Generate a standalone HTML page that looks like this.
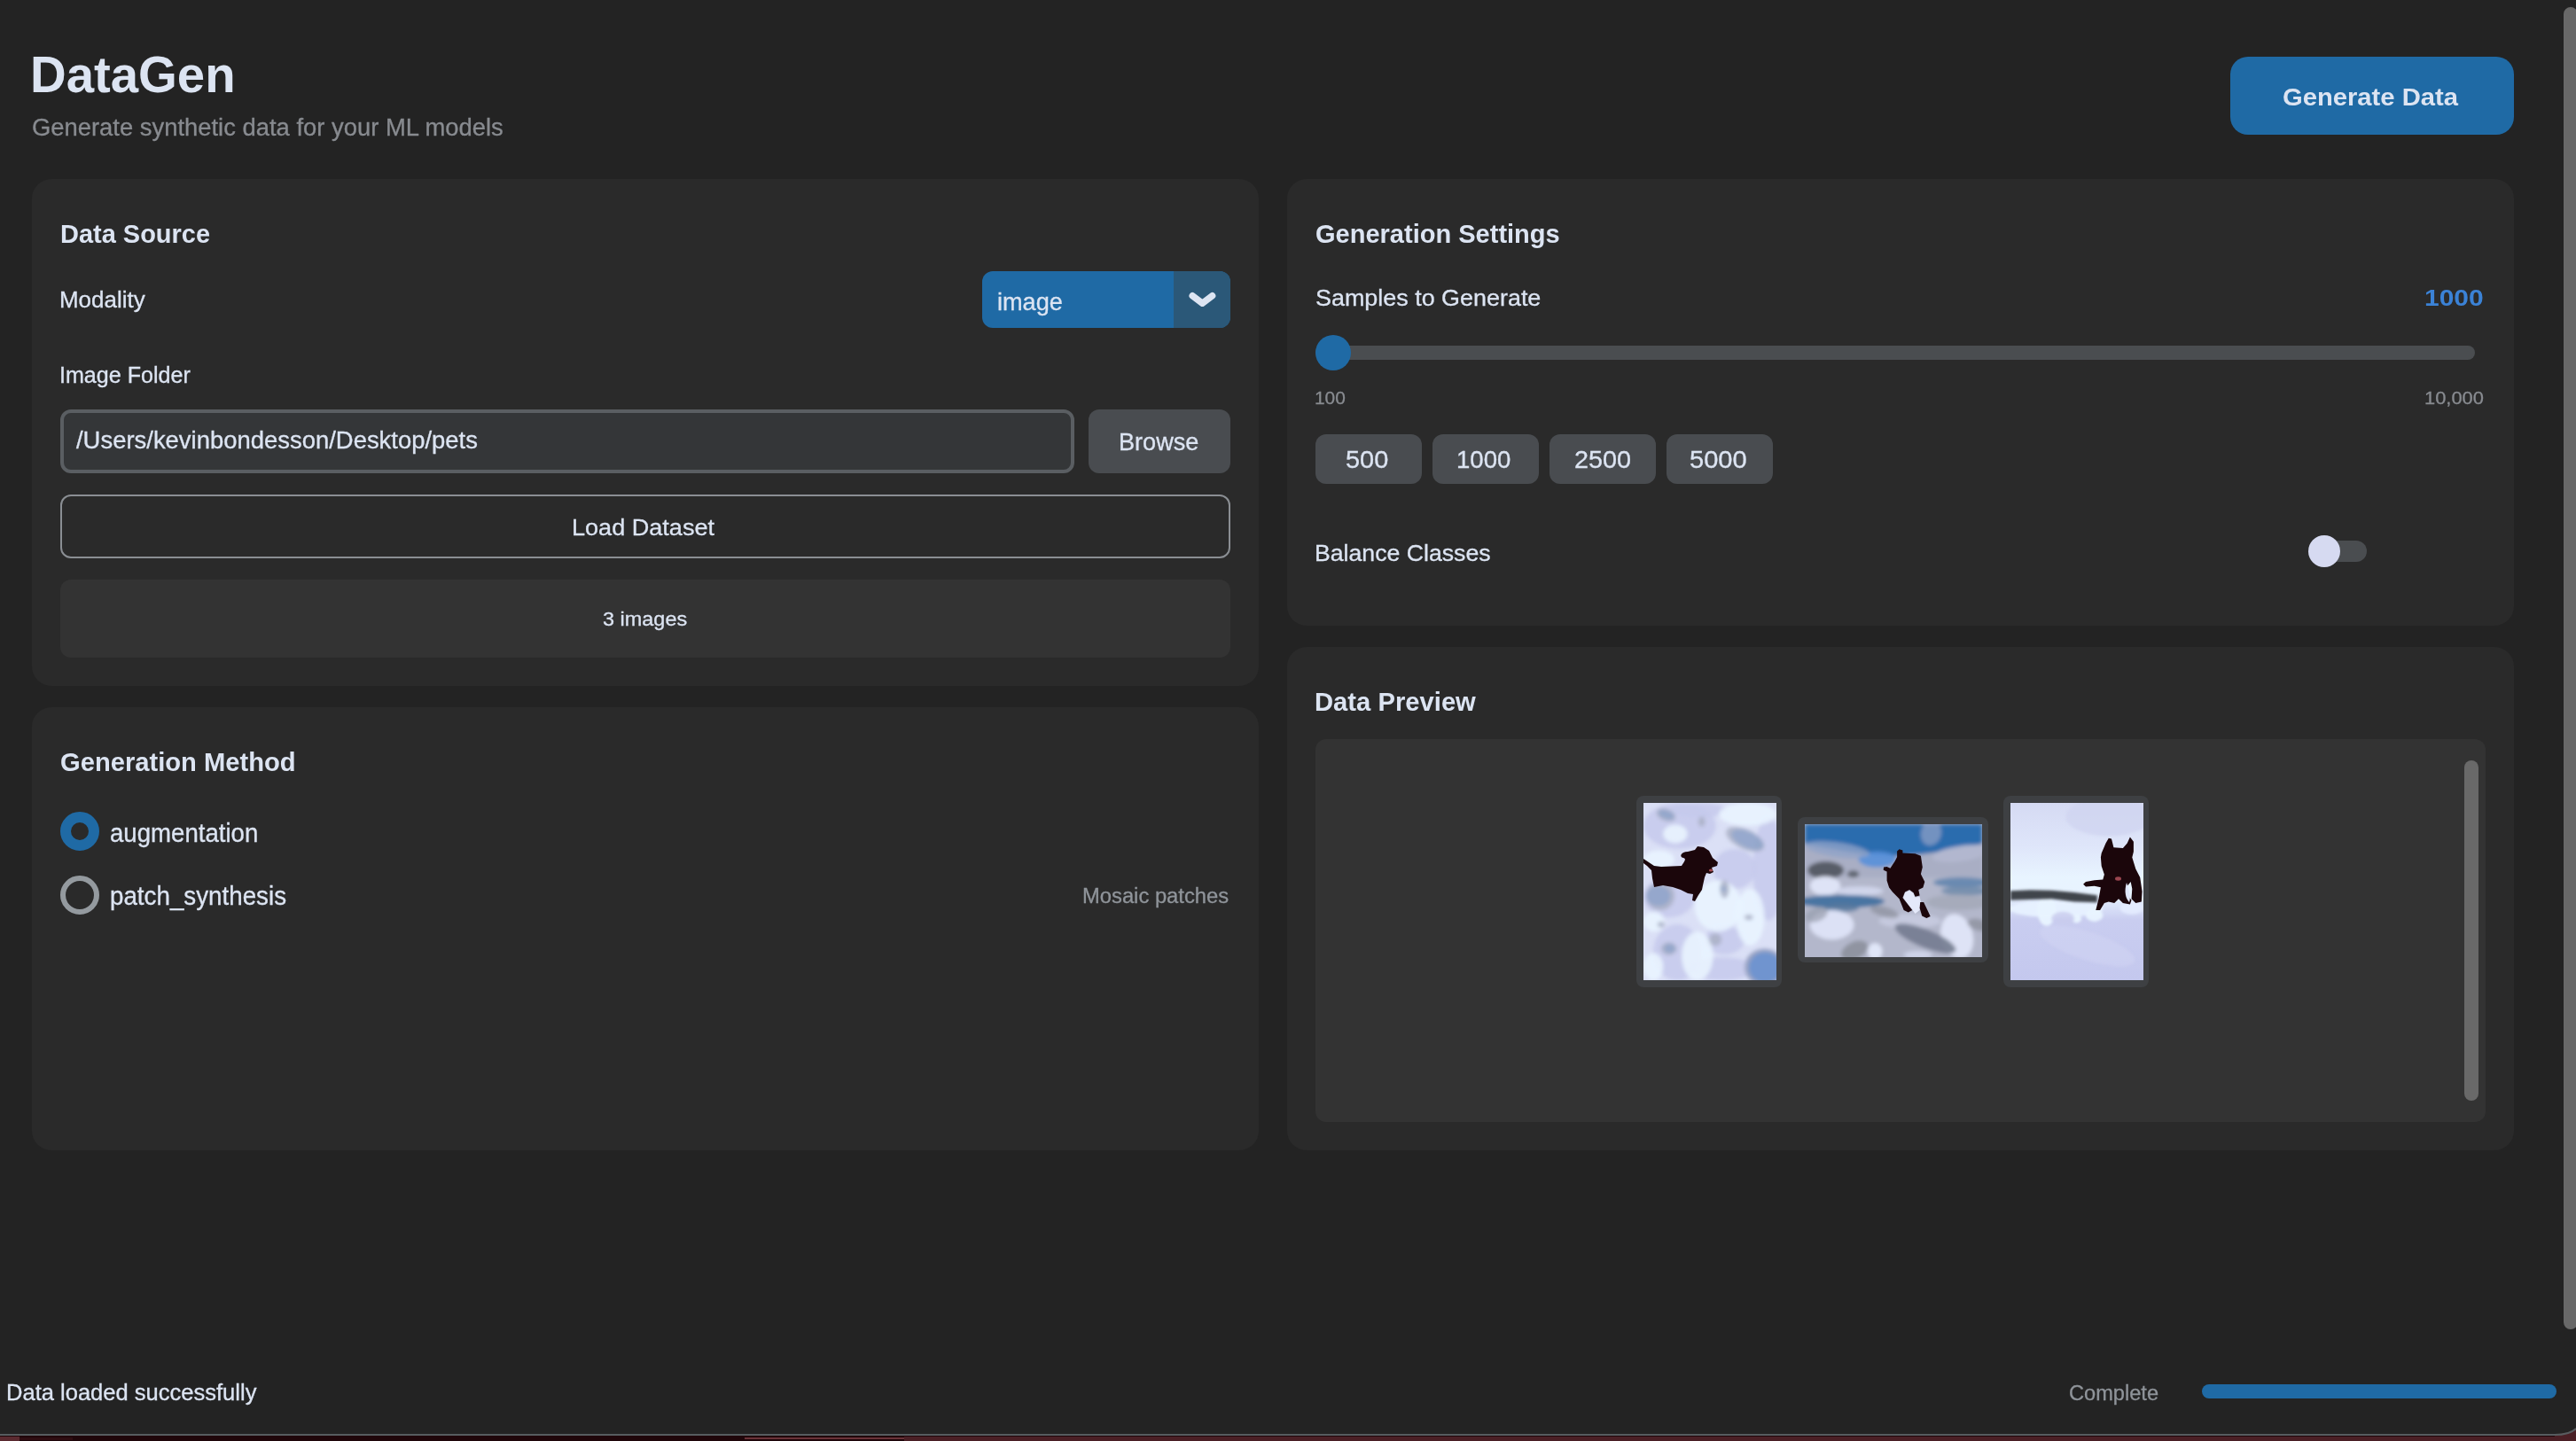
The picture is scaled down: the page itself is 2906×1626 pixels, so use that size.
<!DOCTYPE html>
<html>
<head>
<meta charset="utf-8">
<title>DataGen</title>
<style>
html,body{margin:0;padding:0;}
body{width:2906px;height:1626px;background:#232323;position:relative;overflow:hidden;font-family:"Liberation Sans",sans-serif;}
.a{position:absolute;box-sizing:border-box;}
.t{position:absolute;white-space:nowrap;line-height:1;transform-origin:0 0;font-family:"Liberation Sans",sans-serif;}
.card{background:#2a2a2a;border-radius:22px;}
.inner{background:#333333;border-radius:12px;}
.gbtn{background:#494c50;border-radius:12px;}
</style>
</head>
<body>
<!-- cards -->
<div class="a card" style="left:36px;top:202px;width:1384px;height:572px"></div>
<div class="a card" style="left:36px;top:798px;width:1384px;height:500px"></div>
<div class="a card" style="left:1452px;top:202px;width:1384px;height:504px"></div>
<div class="a card" style="left:1452px;top:730px;width:1384px;height:568px"></div>

<!-- generate button -->
<div class="a" style="left:2516px;top:64px;width:320px;height:88px;background:#1f6aa5;border-radius:20px"></div>

<!-- option menu -->
<div class="a" style="left:1108px;top:306px;width:280px;height:64px;background:#1f6aa5;border-radius:12px;overflow:hidden">
  <div class="a" style="left:216px;top:0;width:64px;height:64px;background:#2b5878"></div>
  <svg class="a" style="left:216px;top:0" width="64" height="64" viewBox="0 0 64 64"><path d="M21.2 27.8 L32.4 36.2 L43.6 27.8" fill="none" stroke="#dce4f2" stroke-width="7.5" stroke-linecap="round" stroke-linejoin="round"/></svg>
</div>

<!-- entry -->
<div class="a" style="left:68px;top:462px;width:1144px;height:72px;background:#343638;border:4px solid #5a5e62;border-radius:12px"></div>
<!-- browse -->
<div class="a gbtn" style="left:1228px;top:462px;width:160px;height:72px;border-radius:12px"></div>
<!-- load dataset -->
<div class="a" style="left:68px;top:558px;width:1320px;height:72px;border:2px solid #8a8e93;border-radius:12px"></div>
<!-- 3 images box -->
<div class="a inner" style="left:68px;top:654px;width:1320px;height:88px"></div>

<!-- radios -->
<div class="a" style="left:68px;top:916px;width:44px;height:44px;border-radius:50%;border:12px solid #1f6aa5"></div>
<div class="a" style="left:68px;top:988px;width:44px;height:44px;border-radius:50%;border:6px solid #949a9f"></div>

<!-- slider -->
<div class="a" style="left:1484px;top:390px;width:1308px;height:16px;border-radius:8px;background:#4a4d50"></div>
<div class="a" style="left:1484px;top:378px;width:40px;height:40px;border-radius:50%;background:#1f6aa5"></div>

<!-- presets -->
<div class="a gbtn" style="left:1484px;top:490px;width:120px;height:56px"></div>
<div class="a gbtn" style="left:1616px;top:490px;width:120px;height:56px"></div>
<div class="a gbtn" style="left:1748px;top:490px;width:120px;height:56px"></div>
<div class="a gbtn" style="left:1880px;top:490px;width:120px;height:56px"></div>

<!-- switch -->
<div class="a" style="left:2610px;top:610px;width:60px;height:24px;border-radius:12px;background:#4a4d50"></div>
<div class="a" style="left:2604px;top:604px;width:36px;height:36px;border-radius:50%;background:#d6daf1"></div>

<!-- preview inner -->
<div class="a inner" style="left:1484px;top:834px;width:1320px;height:432px"></div>
<div class="a" style="left:2780px;top:858px;width:16px;height:384px;border-radius:8px;background:#696969"></div>

<!-- main scrollbar -->
<div class="a" style="left:2892px;top:8px;width:16px;height:1492px;border-radius:8px;background:#686868"></div>

<!-- progress -->
<div class="a" style="left:2484px;top:1562px;width:400px;height:16px;border-radius:8px;background:#1f6aa5"></div>

<!-- bottom strip -->
<div class="a" style="left:0;top:1618px;width:2906px;height:2px;background:#575d60"></div>
<div class="a" style="left:0;top:1620px;width:2906px;height:6px;background:#1f060a"></div>
<div class="a" style="left:0;top:1621px;width:22px;height:5px;background:#5a2a30"></div>
<div class="a" style="left:22px;top:1622px;width:60px;height:3px;background:#2e0d12"></div>
<div class="a" style="left:840px;top:1622px;width:180px;height:2px;background:#6a3238"></div>
<div class="a" style="left:1020px;top:1621px;width:1886px;height:5px;background:#4a1f25"></div>
<svg class="a" style="left:2880px;top:1596px" width="26" height="30" viewBox="0 0 26 30"><path d="M2,22 C13,22 21,20 26,15 L26,30 L2,30 Z" fill="#4a1f25"/><path d="M2,23 C13,23 21,21 26,16" fill="none" stroke="#575d60" stroke-width="2"/></svg>

<div class="a" style="left:1846px;top:898px;width:164px;height:216px;background:#3e4043;border-radius:8px"></div><div class="a" style="left:2028px;top:922px;width:215px;height:164px;background:#3e4043;border-radius:8px"></div><div class="a" style="left:2260px;top:898px;width:164px;height:216px;background:#3e4043;border-radius:8px"></div>
<svg class="a" style="left:1854px;top:906px" width="150" height="200" viewBox="0 0 150 200"><defs><filter id="b1" x="-20%" y="-20%" width="140%" height="140%"><feGaussianBlur stdDeviation="2.2"/></filter><clipPath id="c1"><rect width="150" height="200"/></clipPath></defs><rect width="150" height="200" fill="#dbe0f6"/><g clip-path="url(#c1)"><g filter="url(#b1)"><ellipse cx="40.9" cy="25.9" rx="40.9" ry="25.9" fill="#c6c9ec" opacity="0.85"/><ellipse cx="141.3" cy="74.4" rx="17.7" ry="58.0" fill="#c6c9ec" opacity="0.85"/><ellipse cx="28.8" cy="106.6" rx="28.8" ry="22.5" fill="#c6c9ec" opacity="0.85"/><ellipse cx="38.3" cy="168.7" rx="27.4" ry="31.6" fill="#c6c9ec" opacity="0.85"/><ellipse cx="91.4" cy="154.9" rx="22.5" ry="16.1" fill="#c6c9ec" opacity="0.85"/><ellipse cx="88.2" cy="187.2" rx="38.6" ry="13.0" fill="#c6c9ec" opacity="0.85"/><ellipse cx="102.7" cy="74.4" rx="24.1" ry="22.5" fill="#c6c9ec" opacity="0.85"/><ellipse cx="62.5" cy="8.2" rx="32.2" ry="8.2" fill="#c6c9ec" opacity="0.85"/><ellipse cx="84.2" cy="116.2" rx="26.6" ry="29.0" fill="#e9f4ff" opacity="0.9"/><ellipse cx="60.8" cy="172.7" rx="17.7" ry="27.5" fill="#e9f4ff" opacity="0.9"/><ellipse cx="117.6" cy="13.0" rx="32.6" ry="13.0" fill="#e9f4ff" opacity="0.9"/><ellipse cx="17.5" cy="63.9" rx="17.5" ry="10.5" fill="#e9f4ff" opacity="0.9"/><ellipse cx="11.9" cy="133.9" rx="11.9" ry="11.3" fill="#e9f4ff" opacity="0.9"/><ellipse cx="120.4" cy="129.1" rx="16.1" ry="32.2" fill="#e9f4ff" opacity="0.9"/><ellipse cx="11.1" cy="184.8" rx="11.1" ry="15.5" fill="#e9f4ff" opacity="0.9"/><ellipse cx="35.9" cy="34.9" rx="13.7" ry="10.5" fill="#e9f4ff" opacity="0.9"/><ellipse cx="25.4" cy="13.6" rx="11.3" ry="6.8" fill="#aab0c6" opacity="0.85" transform="rotate(20 25.4 13.6)"/><ellipse cx="65.7" cy="21.2" rx="4.0" ry="5.6" fill="#aab0c6" opacity="0.85"/><ellipse cx="114.8" cy="41.0" rx="23.3" ry="10.9" fill="#aab0c6" opacity="0.85" transform="rotate(25 114.8 41.0)"/><ellipse cx="19.0" cy="105.0" rx="16.1" ry="16.1" fill="#aab0c6" opacity="0.85"/><ellipse cx="91.4" cy="97.3" rx="5.2" ry="10.1" fill="#aab0c6" opacity="0.85"/><ellipse cx="28.7" cy="164.5" rx="8.9" ry="7.2" fill="#aab0c6" opacity="0.85"/><ellipse cx="81.0" cy="154.1" rx="7.2" ry="7.2" fill="#aab0c6" opacity="0.85"/><ellipse cx="118.8" cy="129.1" rx="4.8" ry="3.2" fill="#aab0c6" opacity="0.85"/><ellipse cx="19.8" cy="137.2" rx="4.0" ry="3.2" fill="#aab0c6" opacity="0.85"/><ellipse cx="25.8" cy="13.2" rx="9.3" ry="4.8" fill="#6a90cc" opacity="0.38" transform="rotate(20 25.8 13.2)"/><ellipse cx="117.2" cy="41.4" rx="19.3" ry="8.9" fill="#6a90cc" opacity="0.38" transform="rotate(25 117.2 41.4)"/><ellipse cx="16.6" cy="105.0" rx="13.7" ry="11.3" fill="#6a90cc" opacity="0.38"/><ellipse cx="29.5" cy="164.1" rx="6.4" ry="5.2" fill="#6a90cc" opacity="0.38"/><ellipse cx="90.2" cy="96.9" rx="2.8" ry="3.2" fill="#6a90cc" opacity="0.38"/><ellipse cx="136.5" cy="185.4" rx="22.5" ry="20.9" fill="#9aa4c4"/><ellipse cx="137.3" cy="185.8" rx="18.5" ry="17.3" fill="#6590d2" opacity="0.8"/></g><path d="M0,63 L12,71 L20,72 L43,71 C46,66 49,63 45,62 C40,61 42,55 50,55 L58,53 L61,49 L68,50 L74,54 L78,62 L84,67 L83,71 L77,73 L79,78 L75,80 L71,79 L69,84 L67,93 L66,98 L62,104 L58,111 L55,110 L56,103 L50,102 L42,98 L33,95 L22,93 L12,95 L10,85 L9,76 L4,71 L0,68 Z" fill="#1b060b"/><ellipse cx="76" cy="76" rx="2.2" ry="1.6" fill="#a04a50"/></g></svg>
<svg class="a" style="left:2036px;top:930px" width="200" height="150" viewBox="0 0 200 150"><defs><filter id="b2" x="-20%" y="-20%" width="140%" height="140%"><feGaussianBlur stdDeviation="2"/></filter><clipPath id="c2"><rect width="200" height="150"/></clipPath></defs><rect width="200" height="150" fill="#b3b7cb"/><g clip-path="url(#c2)"><g filter="url(#b2)"><rect x="0" y="22" width="200" height="45" fill="#a9aec4"/><rect x="0" y="60" width="200" height="90" fill="#b3b7cb"/><path d="M0,0 L200,0 L200,22 C170,28 140,34 110,36 C80,36 40,30 0,22 Z" fill="#2b6cae"/><ellipse cx="81.7" cy="39.6" rx="21.1" ry="8.9" fill="#5590da" opacity="0.9"/><ellipse cx="36.7" cy="28.7" rx="36.7" ry="8.3" fill="#8fa3c8" opacity="0.8" transform="rotate(8 36.7 28.7)"/><ellipse cx="142.4" cy="10.2" rx="11.5" ry="14.0" fill="#93a3c8" opacity="0.7" transform="rotate(15 142.4 10.2)"/><ellipse cx="175.6" cy="33.2" rx="31.9" ry="8.9" fill="#b3b8d0" opacity="0.9" transform="rotate(-8 175.6 33.2)"/><ellipse cx="23.6" cy="52.0" rx="20.4" ry="9.9" fill="#535962" opacity="0.95"/><ellipse cx="54.6" cy="56.3" rx="6.7" ry="4.0" fill="#5a606a" opacity="0.9"/><ellipse cx="23.0" cy="69.6" rx="17.2" ry="10.9" fill="#e0e5f8" opacity="0.95"/><ellipse cx="61.9" cy="75.3" rx="26.8" ry="5.1" fill="#d3d8ee" opacity="0.9"/><ellipse cx="40.9" cy="87.1" rx="49.2" ry="7.3" fill="#44709f" opacity="0.95"/><ellipse cx="41.5" cy="94.5" rx="19.2" ry="5.1" fill="#56789e" opacity="0.8"/><ellipse cx="176.8" cy="65.8" rx="31.9" ry="5.7" fill="#5d83ad" opacity="0.85"/><ellipse cx="181.3" cy="75.3" rx="27.5" ry="5.1" fill="#6a87a8" opacity="0.8"/><ellipse cx="173.0" cy="88.1" rx="35.8" ry="8.9" fill="#a2a7b6" opacity="0.8"/><ellipse cx="30.6" cy="113.6" rx="24.9" ry="16.6" fill="#dee3f7" opacity="0.95"/><ellipse cx="171.7" cy="126.4" rx="17.9" ry="25.5" fill="#e0e5f8" opacity="0.95" transform="rotate(-15 171.7 126.4)"/><ellipse cx="79.2" cy="143.6" rx="8.3" ry="9.6" fill="#e3e8fa" opacity="0.95"/><ellipse cx="118.7" cy="109.2" rx="35.1" ry="8.3" fill="#c9cde2" opacity="0.8"/><ellipse cx="127.7" cy="147.5" rx="16.0" ry="4.5" fill="#d6dbf0" opacity="0.8"/><ellipse cx="136.0" cy="129.0" rx="37.0" ry="10.2" fill="#737b90" opacity="0.9" transform="rotate(22 136.0 129.0)"/><ellipse cx="56.2" cy="142.4" rx="16.0" ry="9.6" fill="#8a8e9a" opacity="0.85" transform="rotate(-25 56.2 142.4)"/><ellipse cx="13.1" cy="102.1" rx="13.1" ry="7.7" fill="#979cac" opacity="0.7" transform="rotate(-20 13.1 102.1)"/><ellipse cx="196.0" cy="113.6" rx="12.8" ry="6.4" fill="#8d919e" opacity="0.8" transform="rotate(15 196.0 113.6)"/><ellipse cx="90.0" cy="99.0" rx="16.6" ry="5.7" fill="#8b8f9b" opacity="0.7" transform="rotate(15 90.0 99.0)"/></g><path d="M113.0,77.2 L118.1,74.7 L122.6,77.9 L124.5,82.4 L129.6,81.7 L130.9,88.1 L129.6,97.0 L124.5,100.9 L121.3,96.4 L119.4,94.5 L111.1,83.0Z" fill="#e4e9fa"/><path d="M104.1,30.6 L106.6,28.3 L110.4,29.4 L110.4,32.6 L124.5,33.2 L130.9,35.8 L132.8,48.5 L130.9,56.2 L135.3,65.1 L133.4,71.5 L128.3,74.1 L129.6,80.4 L124.5,81.7 L122.6,77.2 L118.1,74.1 L113.0,76.6 L110.4,83.0 L119.4,94.5 L121.3,97.0 L116.8,99.6 L111.7,97.0 L106.6,84.3 L99.0,76.6 L95.1,71.5 L92.6,63.8 L92.6,53.6 L88.7,51.7 L89.0,48.5 L92.6,47.9 L96.4,49.8 L101.5,42.1 L104.1,37.0Z" fill="#1b060b"/><path d="M130.2,88.1 L134.1,88.1 L141.7,104.1 L137.3,106.0 L132.2,103.4 L129.6,94.5Z" fill="#1b060b"/></g></svg>
<svg class="a" style="left:2268px;top:906px" width="150" height="200" viewBox="0 0 150 200"><defs><linearGradient id="g3" x1="0" y1="0" x2="0" y2="1"><stop offset="0" stop-color="#d5daf3"/><stop offset="0.25" stop-color="#dfe6fa"/><stop offset="0.42" stop-color="#e8f4ff"/><stop offset="0.52" stop-color="#e8f3ff"/><stop offset="0.66" stop-color="#c9cdf0"/><stop offset="1" stop-color="#c4c8ee"/></linearGradient><filter id="b3" x="-20%" y="-20%" width="140%" height="140%"><feGaussianBlur stdDeviation="1.8"/></filter><clipPath id="c3"><rect width="150" height="200"/></clipPath></defs><rect width="150" height="200" fill="url(#g3)"/><g clip-path="url(#c3)"><g filter="url(#b3)"><ellipse cx="110.8" cy="15.6" rx="48.3" ry="21.7" fill="#cfd4f0" opacity="0.8"/><ellipse cx="51.2" cy="119.4" rx="53.1" ry="9.7" fill="#e7f1ff" opacity="0.95"/><ellipse cx="40.7" cy="121.1" rx="10.5" ry="17.7" fill="#e9f4ff" opacity="0.95"/><ellipse cx="94.7" cy="126.7" rx="9.7" ry="7.2" fill="#e9f4ff" opacity="0.95"/><ellipse cx="74.5" cy="130.7" rx="5.6" ry="4.8" fill="#e9f4ff" opacity="0.95"/><ellipse cx="136.9" cy="118.6" rx="13.3" ry="7.2" fill="#e4ecff" opacity="0.9"/><ellipse cx="59.2" cy="130.7" rx="12.9" ry="8.0" fill="#c9ccee" opacity="0.8"/><ellipse cx="86.6" cy="161.3" rx="56.3" ry="16.1" fill="#d2d6f4" opacity="0.5" transform="rotate(18 86.6 161.3)"/></g><g filter="url(#b3)"><path d="M0.0,99.3 L22.2,98.2 L46.4,98.8 L72.1,100.9 L97.9,104.2 L97.9,112.2 L72.1,111.4 L46.4,108.2 L22.2,109.0 L0.0,109.8Z" fill="#3f444c"/></g><path d="M102.7,56.7 L107.5,45.4 L110.8,39.8 L114.0,40.6 L116.4,50.2 L126.9,51.0 L131.7,45.4 L134.9,38.6 L138.9,43.8 L138.9,55.1 L137.3,61.5 L141.3,74.4 L146.2,84.0 L148.6,100.1 L147.8,111.4 L141.3,113.0 L136.5,108.2 L137.3,96.9 L135.7,88.9 L131.7,93.7 L130.1,101.7 L136.5,109.8 L134.9,114.6 L126.9,113.0 L122.0,108.2 L117.2,113.0 L110.8,111.4 L105.9,113.0 L101.1,121.1 L96.3,121.1 L99.5,108.2 L101.9,95.3 L94.7,93.7 L85.0,94.5 L82.1,91.8 L85.0,88.9 L94.7,87.3 L104.3,86.4 L105.9,80.8 L102.7,71.2 L101.9,61.5Z" fill="#1b060b"/><ellipse cx="121.5" cy="85.5" rx="3.5" ry="2.2" fill="#9a4650"/><path d="M131,90 C134,98 136,108 134,112 C130,108 128,100 131,90Z" fill="#dfe6fb"/></g></svg>
<div class="t" style="left:34.34px;top:55.59px;font-size:57.0px;font-weight:bold;color:#dce4f2;transform:scaleX(0.9880)">DataGen</div>
<div class="t" style="left:36.13px;top:130.94px;font-size:27.0px;font-weight:normal;color:#888b90;-webkit-text-stroke:0.3px;transform:scaleX(1.0144)">Generate synthetic data for your ML models</div>
<div class="t" style="left:67.62px;top:249.32px;font-size:29.5px;font-weight:bold;color:#dce4f2;transform:scaleX(0.9819)">Data Source</div>
<div class="t" style="left:67.12px;top:326.48px;font-size:25.0px;font-weight:normal;color:#dce4f2;-webkit-text-stroke:0.3px;transform:scaleX(1.0380)">Modality</div>
<div class="t" style="left:1125.24px;top:325.92px;font-size:28.5px;font-weight:normal;color:#dce4f2;-webkit-text-stroke:0.3px;transform:scaleX(0.9518)">image</div>
<div class="t" style="left:67.24px;top:410.88px;font-size:25.0px;font-weight:normal;color:#dce4f2;-webkit-text-stroke:0.3px;transform:scaleX(1.0037)">Image Folder</div>
<div class="t" style="left:86.00px;top:482.76px;font-size:27.5px;font-weight:normal;color:#dce4f2;-webkit-text-stroke:0.3px;transform:scaleX(0.9977)">/Users/kevinbondesson/Desktop/pets</div>
<div class="t" style="left:1261.73px;top:484.76px;font-size:27.5px;font-weight:normal;color:#dce4f2;-webkit-text-stroke:0.3px;transform:scaleX(0.9857)">Browse</div>
<div class="t" style="left:645.33px;top:581.51px;font-size:26.5px;font-weight:normal;color:#dce4f2;-webkit-text-stroke:0.3px;transform:scaleX(1.0213)">Load Dataset</div>
<div class="t" style="left:680.18px;top:688.49px;font-size:22.5px;font-weight:normal;color:#dce4f2;-webkit-text-stroke:0.3px;transform:scaleX(1.0421)">3 images</div>
<div class="t" style="left:67.83px;top:845.07px;font-size:29.5px;font-weight:bold;color:#dce4f2;transform:scaleX(0.9881)">Generation Method</div>
<div class="t" style="left:123.65px;top:925.50px;font-size:29.0px;font-weight:normal;color:#dce4f2;-webkit-text-stroke:0.3px;transform:scaleX(0.9516)">augmentation</div>
<div class="t" style="left:123.53px;top:997.10px;font-size:29.0px;font-weight:normal;color:#dce4f2;-webkit-text-stroke:0.3px;transform:scaleX(0.9571)">patch_synthesis</div>
<div class="t" style="left:1221.10px;top:1000.37px;font-size:23.0px;font-weight:normal;color:#8f949a;-webkit-text-stroke:0.3px;transform:scaleX(1.0334)">Mosaic patches</div>
<div class="t" style="left:2575.33px;top:95.42px;font-size:28.5px;font-weight:bold;color:#dce4f2;transform:scaleX(1.0241)">Generate Data</div>
<div class="t" style="left:1483.84px;top:248.82px;font-size:29.5px;font-weight:bold;color:#dce4f2;transform:scaleX(0.9836)">Generation Settings</div>
<div class="t" style="left:1483.79px;top:323.36px;font-size:26.5px;font-weight:normal;color:#dce4f2;-webkit-text-stroke:0.3px;transform:scaleX(1.0156)">Samples to Generate</div>
<div class="t" style="left:2735.20px;top:323.36px;font-size:26.5px;font-weight:bold;color:#3b82d6;transform:scaleX(1.1302)">1000</div>
<div class="t" style="left:1483.43px;top:438.85px;font-size:20.0px;font-weight:normal;color:#888b90;-webkit-text-stroke:0.3px;transform:scaleX(1.0435)">100</div>
<div class="t" style="left:2735.36px;top:439.10px;font-size:20.0px;font-weight:normal;color:#888b90;-webkit-text-stroke:0.3px;transform:scaleX(1.0942)">10,000</div>
<div class="t" style="left:1517.84px;top:505.69px;font-size:27.0px;font-weight:normal;color:#dce4f2;-webkit-text-stroke:0.3px;transform:scaleX(1.0700)">500</div>
<div class="t" style="left:1642.68px;top:505.69px;font-size:27.0px;font-weight:normal;color:#dce4f2;-webkit-text-stroke:0.3px;transform:scaleX(1.0208)">1000</div>
<div class="t" style="left:1775.56px;top:505.69px;font-size:27.0px;font-weight:normal;color:#dce4f2;-webkit-text-stroke:0.3px;transform:scaleX(1.0652)">2500</div>
<div class="t" style="left:1905.84px;top:505.69px;font-size:27.0px;font-weight:normal;color:#dce4f2;-webkit-text-stroke:0.3px;transform:scaleX(1.0774)">5000</div>
<div class="t" style="left:1482.87px;top:611.36px;font-size:26.5px;font-weight:normal;color:#dce4f2;-webkit-text-stroke:0.3px;transform:scaleX(1.0060)">Balance Classes</div>
<div class="t" style="left:1483.10px;top:777.50px;font-size:29.0px;font-weight:bold;color:#dce4f2;transform:scaleX(1.0072)">Data Preview</div>
<div class="t" style="left:7.36px;top:1558.88px;font-size:25.0px;font-weight:normal;color:#dce4f2;-webkit-text-stroke:0.3px;transform:scaleX(1.0212)">Data loaded successfully</div>
<div class="t" style="left:2333.72px;top:1560.54px;font-size:23.5px;font-weight:normal;color:#8f949a;-webkit-text-stroke:0.3px;transform:scaleX(1.0047)">Complete</div>
</body>
</html>
